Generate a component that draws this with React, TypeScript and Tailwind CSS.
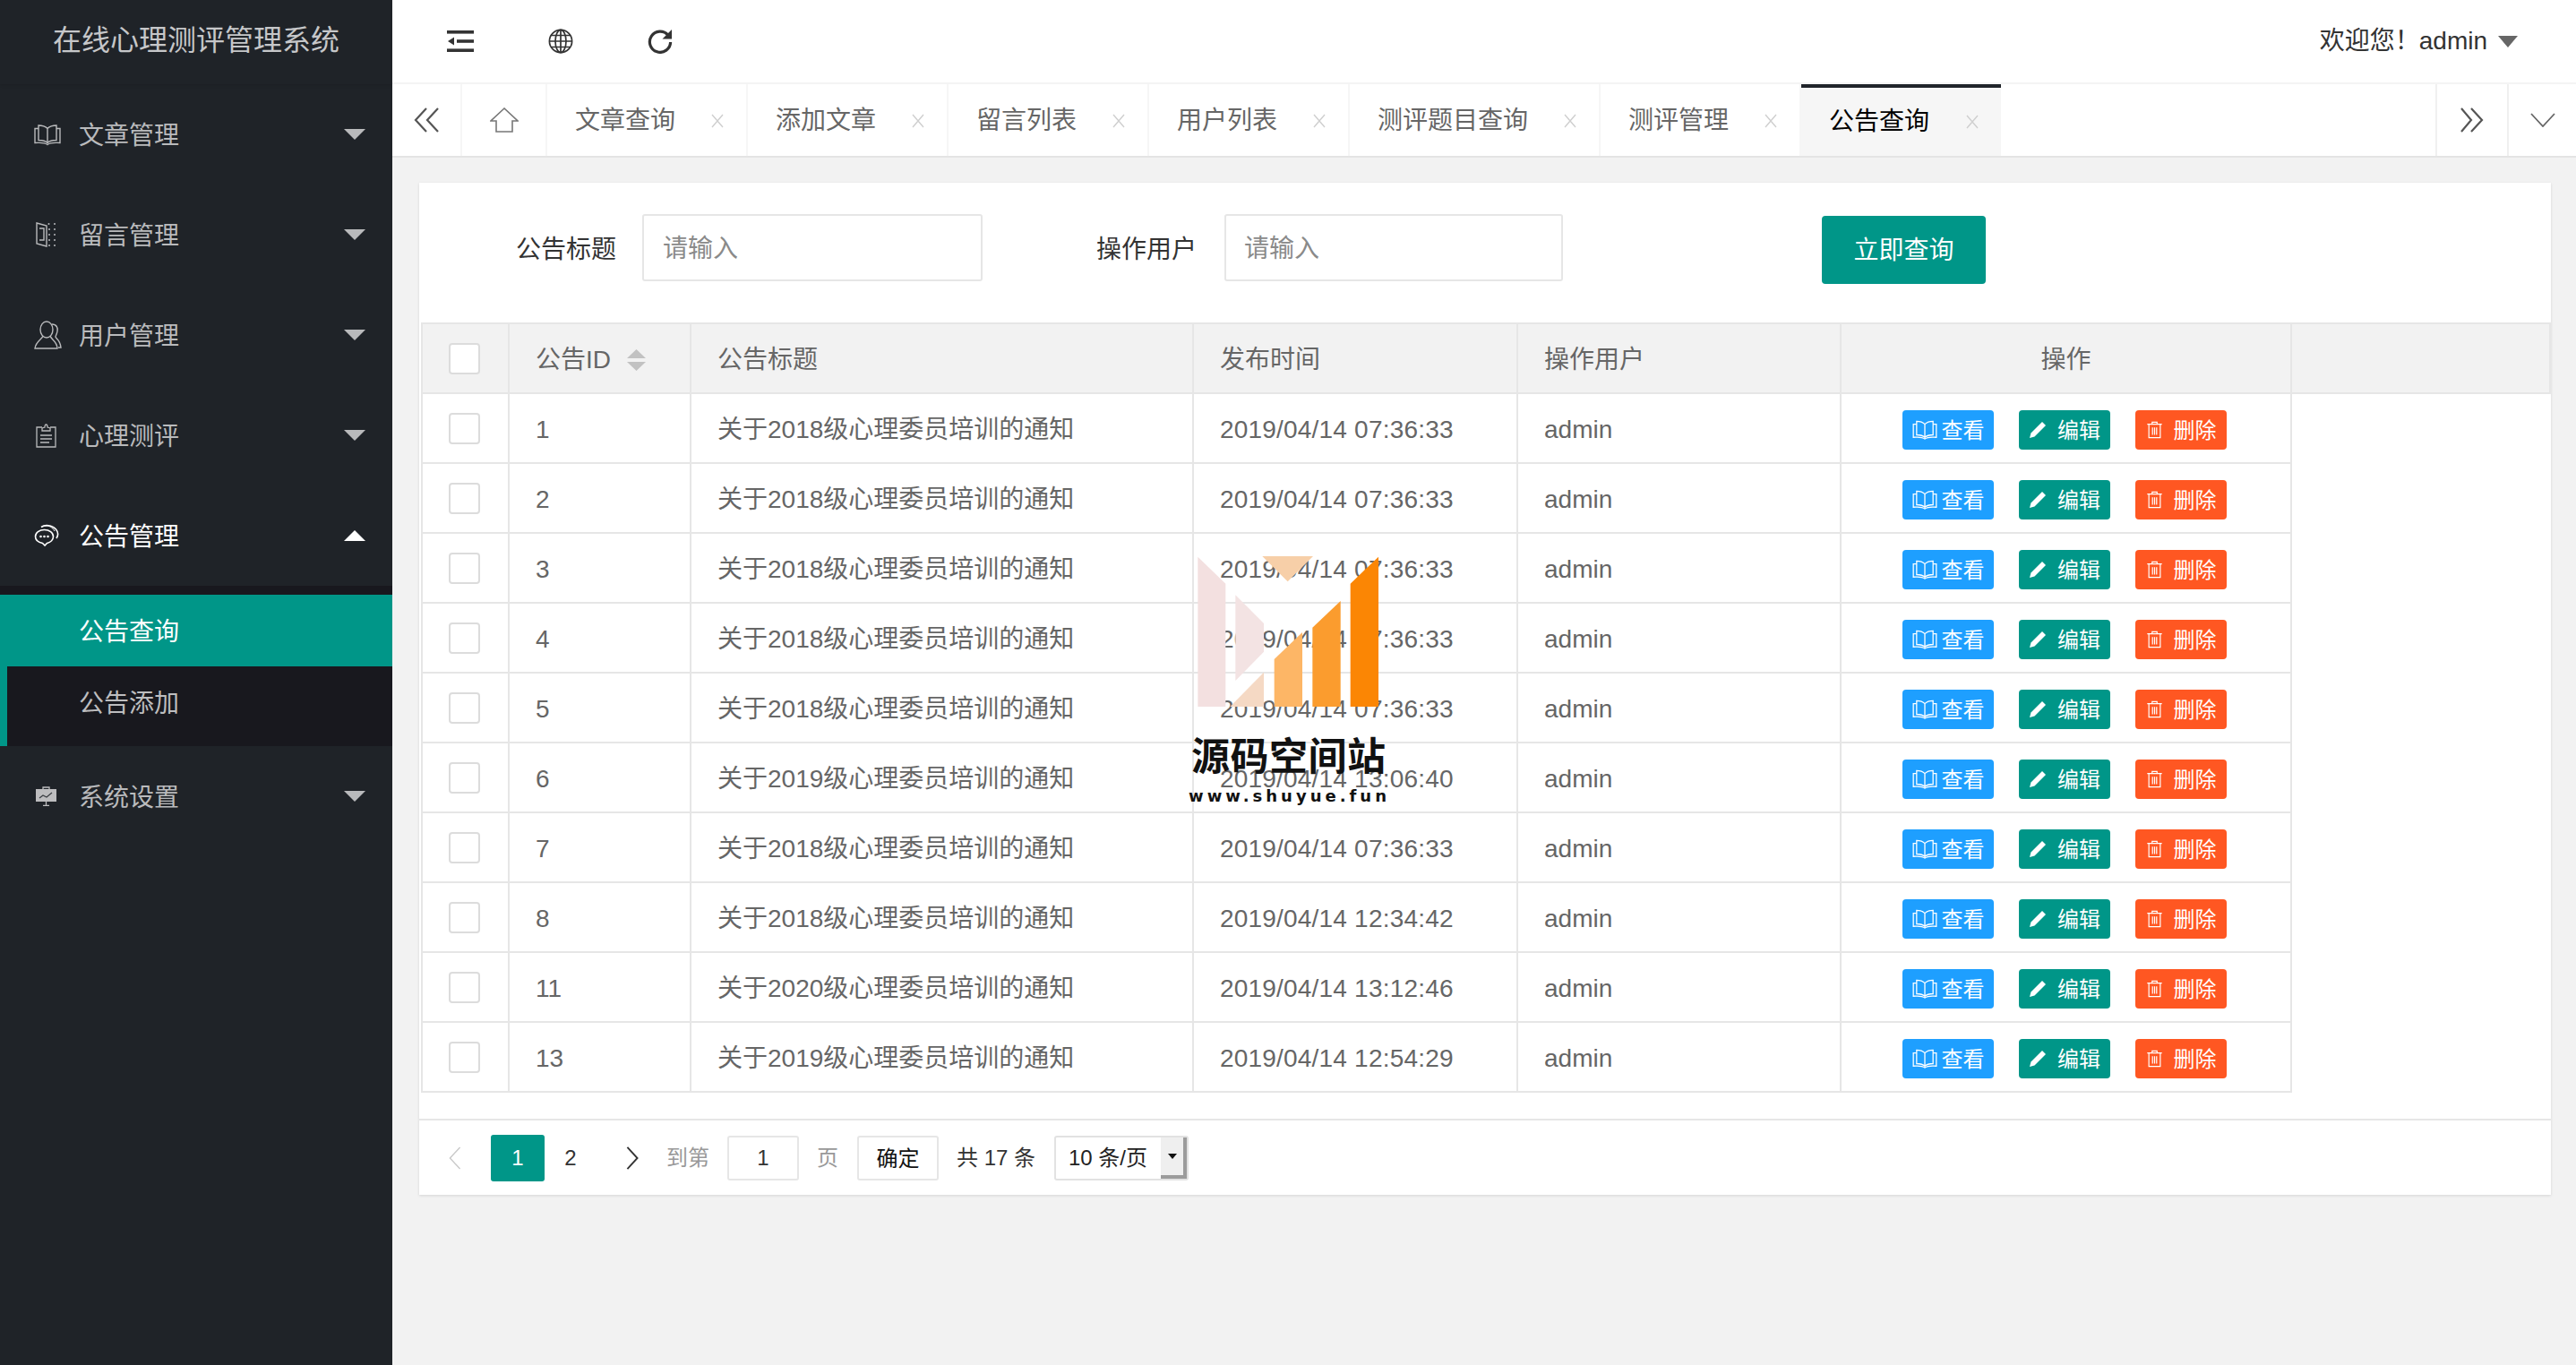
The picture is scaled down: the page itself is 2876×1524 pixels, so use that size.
import React from "react";

const FONT = "font-['Liberation_Sans','Noto_Sans_CJK_SC',sans-serif]";

function BookIcon({ className }: { className?: string }) {
  return (
    <svg viewBox="0 0 30 24" className={className} fill="none" stroke="currentColor" strokeWidth="1.4">
      <path d="M15 5C12 2 8 1.5 5 1.5V18C8 18 12 18 15 21C18 18 22 18 25 18V1.5C22 1.5 18 2 15 5ZM15 5V21" />
      <path d="M5 5H1V21C6 21 11 20 15 23C19 20 24 21 29 21V5H25" />
    </svg>
  );
}
function DoorIcon({ className }: { className?: string }) {
  return (
    <svg viewBox="0 0 23 28" className={className} fill="none" stroke="currentColor" strokeWidth="1.4">
      <path d="M1 1L12 4V27L1 24Z" />
      <path d="M4 7H9V20H4" />
      <g fill="currentColor" stroke="none">
        <circle cx="14.5" cy="2" r="1" /><circle cx="21" cy="2" r="1" />
        <circle cx="15" cy="8" r="1" /><circle cx="21" cy="8" r="1" />
        <circle cx="15" cy="14" r="1" /><circle cx="21" cy="14" r="1" />
        <circle cx="15" cy="20" r="1" /><circle cx="21" cy="20" r="1" />
        <circle cx="15" cy="26" r="1" /><circle cx="21" cy="26" r="1" />
      </g>
    </svg>
  );
}
function UsersIcon({ className }: { className?: string }) {
  return (
    <svg viewBox="0 0 31 32" className={className} fill="none" stroke="currentColor" strokeWidth="1.4">
      <ellipse cx="14" cy="10" rx="7" ry="9" />
      <path d="M10 17C9 21 2 23 1 31H26C26 23 19 21 18 17" />
      <path d="M20 4C25 4 27 8 26 12C25.5 15 24 17 24 18C25 21 29 21 30 30H27" />
    </svg>
  );
}
function ClipIcon({ className }: { className?: string }) {
  return (
    <svg viewBox="0 0 23 27" className={className} fill="none" stroke="currentColor" strokeWidth="1.3">
      <path d="M7 4H1V26H22V4H16" />
      <path d="M7 8V5L10 4C10 2 10.5 1 11.5 1C12.5 1 13 2 13 4L16 5V8Z" />
      <path d="M5 13H18M5 17H18M5 21H15" />
    </svg>
  );
}
function ChatIcon({ className }: { className?: string }) {
  return (
    <svg viewBox="0 0 29 26" className={className} fill="none" stroke="currentColor" strokeWidth="1.6">
      <path d="M12 24L9.5 21.5C4.5 20.5 1.5 17.5 1.5 14C1.5 9.5 6 6.5 11.5 6.5C17 6.5 21.5 9.5 21.5 14C21.5 17.5 18.5 20.5 14.5 21.5Z" />
      <path d="M8 3.5C12 0.5 20 1 24.5 6C27 9 27 13 25 16" />
      <path d="M12 2C17 1.5 21 4 23 8" strokeWidth="1" />
      <g fill="currentColor" stroke="none">
        <circle cx="7.5" cy="14" r="1.3" /><circle cx="11.5" cy="14" r="1.3" /><circle cx="15.5" cy="14" r="1.3" />
      </g>
    </svg>
  );
}
function BoardIcon({ className }: { className?: string }) {
  return (
    <svg viewBox="0 0 23 22" className={className}>
      <path d="M8 3V1H15V3" fill="none" stroke="currentColor" strokeWidth="1.3" />
      <rect x="0" y="3" width="23" height="14" fill="currentColor" />
      <path d="M11.5 17V21M8 21.5H15" stroke="currentColor" strokeWidth="1.3" />
      <path d="M4 13L8 10L12 12L18 7" fill="none" stroke="#3a3d42" strokeWidth="1.2" />
    </svg>
  );
}
function CloseX() {
  return (
    <svg viewBox="0 0 16 16" className="h-[16px] w-[16px] text-[#cfcfcf]" fill="none" stroke="currentColor" strokeWidth="1.4">
      <path d="M2 1L14 15M14 1L2 15" />
    </svg>
  );
}
function MenuArrow({ up }: { up?: boolean }) {
  return (
    <svg viewBox="0 0 24 12" className="ml-auto mr-[30px] h-[12px] w-[24px]" fill="currentColor">
      {up ? <path d="M12 0L24 12H0Z" /> : <path d="M0 0H24L12 12Z" />}
    </svg>
  );
}

const menus: [string, (p: { className?: string }) => React.ReactElement, string][] = [
  ["文章管理", BookIcon, "h-[25px] w-[30px]"],
  ["留言管理", DoorIcon, "h-[28px] w-[23px] ml-[2px]"],
  ["用户管理", UsersIcon, "h-[32px] w-[31px]"],
  ["心理测评", ClipIcon, "h-[27px] w-[23px] ml-[2px]"],
];

function MenuItem({ label, Icon, iconClass, active }: { label: string; Icon: (p: { className?: string }) => React.ReactElement; iconClass: string; active?: boolean }) {
  return (
    <div className={`flex h-[112px] items-center pl-[38px] text-[28px] ${active ? "text-white" : "text-[#b9babc]"}`}>
      <div className="flex w-[50px] items-center">
        <Icon className={iconClass} />
      </div>
      <span className="pt-[4px]">{label}</span>
      <MenuArrow up={active} />
    </div>
  );
}

const tabs: [string, string][] = [
  ["文章查询", "w-[224px]"],
  ["添加文章", "w-[224px]"],
  ["留言列表", "w-[224px]"],
  ["用户列表", "w-[224px]"],
  ["测评题目查询", "w-[280px]"],
  ["测评管理", "w-[224px]"],
];

const rows: [string, string, string][] = [
  ["1", "关于2018级心理委员培训的通知", "2019/04/14 07:36:33"],
  ["2", "关于2018级心理委员培训的通知", "2019/04/14 07:36:33"],
  ["3", "关于2018级心理委员培训的通知", "2019/04/14 07:36:33"],
  ["4", "关于2018级心理委员培训的通知", "2019/04/14 07:36:33"],
  ["5", "关于2018级心理委员培训的通知", "2019/04/14 07:36:33"],
  ["6", "关于2019级心理委员培训的通知", "2019/04/14 13:06:40"],
  ["7", "关于2018级心理委员培训的通知", "2019/04/14 07:36:33"],
  ["8", "关于2018级心理委员培训的通知", "2019/04/14 12:34:42"],
  ["11", "关于2020级心理委员培训的通知", "2019/04/14 13:12:46"],
  ["13", "关于2019级心理委员培训的通知", "2019/04/14 12:54:29"],
];

function Checkbox() {
  return <div className="mx-auto h-[35px] w-[35px] rounded-[4px] border-2 border-[#dcdcdc] bg-white" />;
}

function ActionBtn({ color, children }: { color: string; children: React.ReactNode }) {
  return (
    <div className={`flex h-[44px] w-[102px] items-center justify-center rounded-[4px] text-[24px] text-white ${color}`}>
      {children}
    </div>
  );
}

const cellBase = "border-b-2 border-r-2 border-[#e6e6e6] text-[28px] font-normal text-[#666] align-middle p-0";
const textCell = `${cellBase} text-left pl-[29px] pt-[3px]`;

export default function App() {
  return (
    <div className={`relative flex h-[1524px] w-[2876px] overflow-hidden bg-[#f2f2f2] ${FONT}`}>
      {/* Sidebar */}
      <aside className="h-full w-[438px] shrink-0 bg-[#1f2328]">
        <div className="flex h-[94px] items-center justify-center pb-[4px] text-[32px] text-[#c6c7c9] shadow-[0_2px_3px_rgba(0,0,0,0.08)]">在线心理测评管理系统</div>
        {menus.map(([label, Icon, cls]) => (
          <MenuItem key={label} label={label} Icon={Icon} iconClass={cls} />
        ))}
        <MenuItem label="公告管理" Icon={ChatIcon} iconClass="h-[26px] w-[29px]" active />
        <div className="bg-[#18181e] pt-[10px]">
          <div className="flex h-[80px] items-center bg-[#009688] pl-[88px] pt-[4px] text-[28px] text-white">公告查询</div>
          <div className="flex h-[89px] items-center border-l-[8px] border-[#009688] pb-[6px] pl-[80px] text-[28px] text-[#bdbdbf]">公告添加</div>
        </div>
        <MenuItem label="系统设置" Icon={BoardIcon} iconClass="h-[22px] w-[23px] ml-[2px] text-[#bdbdbf]" />
      </aside>

      {/* Main */}
      <main className="flex h-full min-w-0 flex-1 flex-col">
        {/* Top header */}
        <header className="flex h-[94px] shrink-0 items-center border-b-2 border-[#f4f4f4] bg-white text-[#333]">
          <svg viewBox="0 0 30 24" className="ml-[61px] h-[24px] w-[30px]" fill="currentColor">
            <rect x="0" y="0" width="30" height="3.6" />
            <rect x="11" y="10.2" width="19" height="3.6" />
            <rect x="0" y="20.4" width="30" height="3.6" />
            <path d="M1 12L8 7.5V16.5Z" />
          </svg>
          <svg viewBox="0 0 28 28" className="ml-[83px] h-[28px] w-[28px]" fill="none" stroke="currentColor" strokeWidth="1.7">
            <circle cx="14" cy="14" r="12.6" />
            <ellipse cx="14" cy="14" rx="6" ry="12.6" />
            <path d="M14 1.4V26.6M1.4 14H26.6M3.4 7.5H24.6M3.4 20.5H24.6" />
          </svg>
          <svg viewBox="0 0 28 28" className="ml-[83px] h-[28px] w-[28px]" fill="none" stroke="currentColor" strokeWidth="3.2">
            <path d="M22.8 7.2A11.6 11.6 0 1 0 25.6 15" />
            <path d="M27 1V11.5H16.5Z" fill="currentColor" stroke="none" />
          </svg>
          <div className="ml-auto mr-[65px] flex items-center text-[28px]">
            <span>欢迎您！</span>
            <span className="-ml-[1px]">admin</span>
            <svg viewBox="0 0 22 13" className="ml-[12px] h-[13px] w-[22px] text-[#666]" fill="currentColor">
              <path d="M0 0H22L11 13Z" />
            </svg>
          </div>
        </header>

        {/* Tabs */}
        <div className="flex h-[82px] shrink-0 border-b-2 border-[#e4e4e4] bg-white text-[28px] text-[#666]">
          <div className="flex w-[78px] items-center justify-center border-r-2 border-[#f6f6f6] pl-[2px]">
            <svg viewBox="0 0 30 28" className="h-[28px] w-[30px] text-[#555]" fill="none" stroke="currentColor" strokeWidth="2.2">
              <path d="M14 1L2 14L14 27M27 1L15 14L27 27" />
            </svg>
          </div>
          <div className="flex w-[95px] items-center justify-center border-r-2 border-[#f6f6f6]">
            <svg viewBox="0 0 32 28" className="h-[28px] w-[32px] text-[#777]" fill="none" stroke="currentColor" strokeWidth="1.6">
              <path d="M16 1L1 15H7V27H25V15H31Z" />
            </svg>
          </div>
          {tabs.map(([t, w]) => (
            <div key={t} className={`flex items-center border-r-2 border-[#f6f6f6] pl-[31px] pt-[2px] ${w}`}>
              <span>{t}</span>
              <span className="ml-auto mr-[24px] flex"><CloseX /></span>
            </div>
          ))}
          <div className="flex w-[223px] items-center border-t-4 border-[#20242a] bg-[#f6f6f6] pl-[31px] text-black">
            <span>公告查询</span>
            <span className="ml-auto mr-[24px] flex"><CloseX /></span>
          </div>
          <div className="ml-auto flex w-[80px] items-center justify-center border-l-2 border-[#f0f0f0] pr-[2px]">
            <svg viewBox="0 0 27 28" className="h-[28px] w-[27px] text-[#555]" fill="none" stroke="currentColor" strokeWidth="2.2">
              <path d="M2 1L13 14L2 27M13 1L25 14L13 27" />
            </svg>
          </div>
          <div className="flex w-[77px] items-center justify-center border-l-2 border-[#f0f0f0]">
            <svg viewBox="0 0 28 16" className="h-[16px] w-[28px] text-[#666]" fill="none" stroke="currentColor" strokeWidth="1.8">
              <path d="M1 1L14 15L27 1" />
            </svg>
          </div>
        </div>

        {/* Card */}
        <section className="ml-[30px] mr-[28px] mt-[28px] bg-white shadow-[0_1px_3px_rgba(0,0,0,0.12)]">
          {/* Filter form */}
          <div className="flex h-[156px] items-start pl-[108px]">
            <div className="mt-[36px] flex h-[75px] w-[110px] shrink-0 items-center whitespace-nowrap pt-[3px] text-[28px] text-[#333]">公告标题</div>
            <div className="ml-[31px] mt-[35px] flex h-[75px] w-[380px] shrink-0 items-center rounded-[3px] border-2 border-[#e6e6e6] pl-[21px] pt-[2px] text-[28px] text-[#8a8a8a]">请输入</div>
            <div className="ml-[127px] mt-[36px] flex h-[75px] w-[110px] shrink-0 items-center whitespace-nowrap pt-[3px] text-[28px] text-[#333]">操作用户</div>
            <div className="ml-[33px] mt-[35px] flex h-[75px] w-[378px] shrink-0 items-center rounded-[3px] border-2 border-[#e6e6e6] pl-[20px] pt-[2px] text-[28px] text-[#8a8a8a]">请输入</div>
            <div className="ml-[289px] mt-[37px] flex h-[76px] w-[183px] shrink-0 items-center justify-center rounded-[4px] bg-[#009688] pt-[2px] text-[28px] text-white">立即查询</div>
          </div>

          {/* Table */}
          <table className="ml-[2px] w-[2378px] table-fixed border-separate border-spacing-0">
            <colgroup>
              <col className="w-[99px]" />
              <col className="w-[203px]" />
              <col className="w-[561px]" />
              <col className="w-[362px]" />
              <col className="w-[361px]" />
              <col className="w-[503px]" />
              <col />
            </colgroup>
            <thead>
              <tr className="h-[80px] bg-[#f2f2f2]">
                <th className={`${cellBase} border-l-2 border-t-2 pr-[3px]`}><Checkbox /></th>
                <th className={`${textCell} border-t-2`}>
                  <span className="flex items-center">
                    公告ID
                    <svg viewBox="0 0 21 24" className="ml-[18px] h-[24px] w-[21px] text-[#c2c2c2]" fill="currentColor">
                      <path d="M10.5 0L21 10H0ZM0 14H21L10.5 24Z" />
                    </svg>
                  </span>
                </th>
                <th className={`${textCell} border-t-2`}>公告标题</th>
                <th className={`${textCell} border-t-2`}>发布时间</th>
                <th className={`${textCell} border-t-2`}>操作用户</th>
                <th className={`${cellBase} border-t-2 pt-[3px] text-center`}>操作</th>
                <th className={`${cellBase} border-t-2`}></th>
              </tr>
            </thead>
            <tbody>
              {rows.map(([id, title, time], i) => (
                <tr key={i} className="h-[78px]">
                  <td className={`${cellBase} border-l-2 pr-[3px]`}><Checkbox /></td>
                  <td className={textCell}>{id}</td>
                  <td className={textCell}>{title}</td>
                  <td className={`${textCell} tracking-[0.2px]`}>{time}</td>
                  <td className={textCell}>admin</td>
                  <td className={cellBase}>
                    <div className="flex gap-[28px] pl-[68px] pt-[4px]">
                      <ActionBtn color="bg-[#1e9fff]">
                        <BookIcon className="mr-[5px] h-[22px] w-[28px]" />
                        <span className="pt-[2px]">查看</span>
                      </ActionBtn>
                      <ActionBtn color="bg-[#009688]">
                        <svg viewBox="0 0 20 20" className="mr-[12px] h-[20px] w-[20px]" fill="currentColor">
                          <path d="M15 1L19 5L6.5 17.5L1 19L2.5 13.5Z" />
                        </svg>
                        <span className="pt-[2px]">编辑</span>
                      </ActionBtn>
                      <ActionBtn color="bg-[#ff5722]">
                        <svg viewBox="0 0 20 22" className="mr-[12px] h-[20px] w-[19px]" fill="none" stroke="currentColor" strokeWidth="1.3">
                          <path d="M1 4H19M7 4V1.5H13V4M3 4V20.5H17V4M7.5 8V17M10 8V17M12.5 8V17" />
                        </svg>
                        <span className="pt-[2px]">删除</span>
                      </ActionBtn>
                    </div>
                  </td>
                  <td className="p-0"></td>
                </tr>
              ))}
            </tbody>
          </table>
          <div className="h-[29px]" />

          {/* Pagination */}
          <div className="flex h-[85px] items-center border-t-2 border-[#e6e6e6] text-[24px]">
            <svg viewBox="0 0 14 28" className="ml-[33px] h-[26px] w-[14px] text-[#c8c8c8]" fill="none" stroke="currentColor" strokeWidth="1.5">
              <path d="M13 1L1 14L13 27" />
            </svg>
            <div className="ml-[33px] flex h-[52px] w-[60px] items-center justify-center rounded-[3px] bg-[#009688] text-white">1</div>
            <div className="flex h-[52px] w-[58px] items-center justify-center text-[#333]">2</div>
            <svg viewBox="0 0 14 28" className="ml-[33px] h-[26px] w-[14px] text-[#333]" fill="none" stroke="currentColor" strokeWidth="2">
              <path d="M1 1L13 14L1 27" />
            </svg>
            <div className="ml-[31px] w-[48px] text-[#999]">到第</div>
            <div className="ml-[20px] flex h-[50px] w-[80px] items-center justify-center rounded-[3px] border-2 border-[#e6e6e6] text-[#333]">1</div>
            <div className="ml-[20px] w-[24px] text-[#999]">页</div>
            <div className="ml-[21px] flex h-[50px] w-[91px] items-center justify-center rounded-[3px] border-2 border-[#e6e6e6] pt-[2px] text-[#111]">确定</div>
            <div className="ml-[20px] w-[89px] whitespace-nowrap text-[#333]">共 17 条</div>
            <div className="ml-[20px] flex h-[50px] w-[150px] shrink-0 items-stretch rounded-[3px] border-2 border-[#e2e2e2]">
              <div className="flex flex-1 items-center whitespace-nowrap pl-[14px] text-[#222]">10 条/页</div>
              <div className="flex w-[29px] items-center justify-center border-b-[4px] border-r-[4px] border-[#9c9c9c] bg-[#efefef]">
                <svg viewBox="0 0 10 6" className="h-[6px] w-[10px] text-[#111]" fill="currentColor">
                  <path d="M0 0H10L5 6Z" />
                </svg>
              </div>
            </div>
          </div>
        </section>
      </main>

      {/* Watermark logo */}
      <div className="pointer-events-none absolute left-[1250px] top-[560px] h-[360px] w-[400px]">
        <svg viewBox="0 0 1200 1080" className="absolute inset-0 h-full w-full">
          <polygon points="262,185 355,275 355,687 262,687" fill="#f3e0e0" />
          <polygon points="388,313 483,408 483,503 388,600" fill="#f3e3e3" />
          <polygon points="483,572 483,687 370,687" fill="#f5d9c4" />
          <polygon points="478,183 648,183 563,268" fill="#f7cfa8" />
          <polygon points="518,528 612,438 612,687 518,687" fill="#fdb666" />
          <polygon points="646,422 740,333 740,687 646,687" fill="#fb9c2e" />
          <polygon points="773,275 867,185 867,687 773,687" fill="#fb8604" />
        </svg>
        <div className="absolute left-[80px] top-[256px] whitespace-nowrap text-[43px] font-bold leading-[58px] tracking-[0.5px] text-[#111]">源码空间站</div>
        <div className="absolute left-[77px] top-[315px] whitespace-nowrap font-['DejaVu_Sans',sans-serif] text-[18px] font-bold leading-[28px] tracking-[4px] text-[#111]">www.shuyue.fun</div>
      </div>
    </div>
  );
}
